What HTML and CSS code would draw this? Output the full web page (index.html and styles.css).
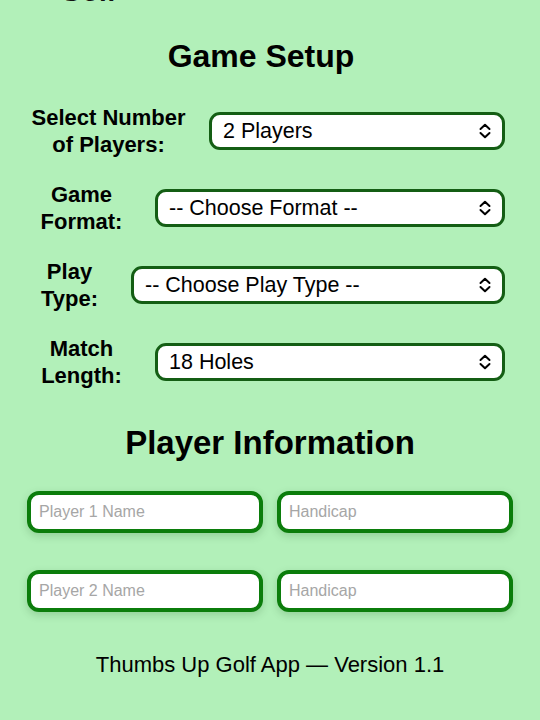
FILE: index.html
```html
<!DOCTYPE html>
<html lang="en">
<head>
<meta charset="utf-8">
<title>Game Setup</title>
<link rel="stylesheet" href="styles.css">
</head>
<body>
<div class="top-title">Golf</div>
<section class="setup">
  <h2 class="heading heading-setup">Game Setup</h2>
  <div class="fields">
    <div class="field">
      <label class="field-label" for="players">Select Number of Players:</label>
      <div class="select-wrap w-players">
        <select id="players" class="select"><option>2 Players</option><option>1 Player</option><option>3 Players</option><option>4 Players</option></select>
        <svg class="chev" viewBox="0 0 16 16" width="16" height="16"><path d="M3.5 6 L8 1.8 L12.5 6 M3.5 10 L8 14.2 L12.5 10" fill="none" stroke="#000" stroke-width="2" stroke-linecap="round" stroke-linejoin="round"/></svg>
      </div>
    </div>
    <div class="field">
      <label class="field-label" for="format">Game Format:</label>
      <div class="select-wrap w-format">
        <select id="format" class="select"><option>-- Choose Format --</option></select>
        <svg class="chev" viewBox="0 0 16 16" width="16" height="16"><path d="M3.5 6 L8 1.8 L12.5 6 M3.5 10 L8 14.2 L12.5 10" fill="none" stroke="#000" stroke-width="2" stroke-linecap="round" stroke-linejoin="round"/></svg>
      </div>
    </div>
    <div class="field">
      <label class="field-label" for="ptype">Play Type:</label>
      <div class="select-wrap w-type">
        <select id="ptype" class="select"><option>-- Choose Play Type --</option></select>
        <svg class="chev" viewBox="0 0 16 16" width="16" height="16"><path d="M3.5 6 L8 1.8 L12.5 6 M3.5 10 L8 14.2 L12.5 10" fill="none" stroke="#000" stroke-width="2" stroke-linecap="round" stroke-linejoin="round"/></svg>
      </div>
    </div>
    <div class="field">
      <label class="field-label" for="length">Match Length:</label>
      <div class="select-wrap w-length">
        <select id="length" class="select"><option>18 Holes</option><option>9 Holes</option></select>
        <svg class="chev" viewBox="0 0 16 16" width="16" height="16"><path d="M3.5 6 L8 1.8 L12.5 6 M3.5 10 L8 14.2 L12.5 10" fill="none" stroke="#000" stroke-width="2" stroke-linecap="round" stroke-linejoin="round"/></svg>
      </div>
    </div>
  </div>
</section>
<section class="players">
  <h2 class="heading heading-players">Player Information</h2>
  <div class="player-grid">
    <input class="text-input" type="text" placeholder="Player 1 Name">
    <input class="text-input" type="text" placeholder="Handicap">
    <input class="text-input" type="text" placeholder="Player 2 Name">
    <input class="text-input" type="text" placeholder="Handicap">
  </div>
</section>
<footer class="footer">Thumbs Up Golf App — Version 1.1</footer>
</body>
</html>
```
FILE: styles.css
```css
html, body {
  background: #b2f0b9;
}
body {
  margin: 0 8px;
  font-family: "Liberation Sans", Arial, sans-serif;
  color: #000;
  overflow: hidden;
}
.top-title {
  font-weight: bold;
  font-size: 28px;
  line-height: 32px;
  margin-top: -24px;
  padding-left: 52px;
  height: 32px;
  color: #111;
}
.setup {
  padding-right: 18px;
}
.heading {
  margin: 0;
  text-align: center;
  font-weight: bold;
}
.heading-setup {
  font-size: 32px;
  line-height: 40px;
  margin-top: 28px;
}
.fields {
  display: flex;
  flex-direction: column;
  gap: 23px;
  margin-top: 28px;
  padding-right: 9px;
}
.field {
  display: flex;
  align-items: center;
}
.field-label {
  flex: 1;
  padding: 0 16px;
  text-align: center;
  font-weight: bold;
  font-size: 22px;
  line-height: 27px;
}
.select-wrap {
  position: relative;
  flex: none;
}
.w-players { width: 296px; }
.w-format { width: 350px; }
.w-type { width: 374px; }
.w-length { width: 350px; }
.select {
  appearance: none;
  -webkit-appearance: none;
  display: block;
  width: 100%;
  height: 38px;
  box-sizing: border-box;
  border: 3px solid #145e14;
  border-radius: 11px;
  background: #fff;
  padding: 0 40px 0 11px;
  font-family: "Liberation Sans", Arial, sans-serif;
  font-size: 21.5px;
  color: #000;
  outline: none;
}
.chev {
  position: absolute;
  right: 12px;
  top: 11px;
  pointer-events: none;
}
.players {
  margin-top: 36px;
}
.heading-players {
  font-size: 33px;
  line-height: 36px;
}
.player-grid {
  display: grid;
  grid-template-columns: 1fr 1fr;
  column-gap: 14px;
  row-gap: 37px;
  padding: 0 19px;
  margin-top: 30px;
}
.text-input {
  box-sizing: border-box;
  width: 100%;
  height: 42px;
  border: 4px solid #0b7d0b;
  border-radius: 12px;
  background: #fff;
  padding: 0 8px;
  font-family: "Liberation Sans", Arial, sans-serif;
  font-size: 16px;
  color: #000;
  box-shadow: 0 3px 8px rgba(0, 60, 0, 0.18);
  outline: none;
}
.text-input::placeholder {
  color: #a6a6a6;
}
.footer {
  margin-top: 40px;
  text-align: center;
  font-size: 22px;
  line-height: 25px;
}
```
